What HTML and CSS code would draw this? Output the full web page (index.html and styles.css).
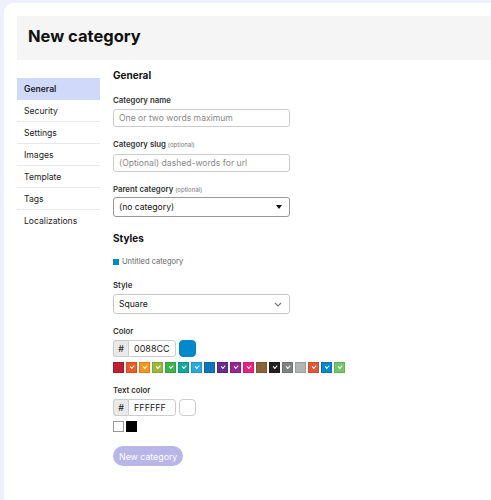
FILE: index.html
```html
<!DOCTYPE html>
<html lang="en">
<head>
	<meta charset="UTF-8">
	<title>New category</title>
	<link rel="stylesheet" href="styles.css">
</head>
<body>
<div class="page">
	<div class="header">
		<h1>New category</h1>
	</div>

	<div class="layout">
		<ul class="nav">
			<li class="active">General</li>
			<li>Security</li>
			<li>Settings</li>
			<li>Images</li>
			<li>Template</li>
			<li>Tags</li>
			<li>Localizations</li>
		</ul>

		<form class="content">
			<h2>General</h2>

			<div class="field">
				<label>Category name</label>
				<input class="text" type="text" placeholder="One or two words maximum">
			</div>

			<div class="field">
				<label>Category slug <span class="opt">(optional)</span></label>
				<input class="text" type="text" placeholder="(Optional) dashed-words for url">
			</div>

			<div class="field">
				<label class="tight">Parent category <span class="opt">(optional)</span></label>
				<div class="combo">
					<span>(no category)</span>
					<span class="caret"></span>
				</div>
			</div>

			<h2 class="styles">Styles</h2>

			<div class="badge"><span class="badge-dot"></span>Untitled category</div>

			<div class="field">
				<label>Style</label>
				<div class="combo light">
					<span>Square</span>
					<svg class="chev" width="8" height="5" viewBox="0 0 8 5"><path d="M1 1l3 3 3-3" fill="none" stroke="#777" stroke-width="1.1"/></svg>
				</div>
			</div>

			<div class="field">
				<label>Color</label>
				<div class="hex-row">
					<span class="hash">#</span>
					<input class="hex" type="text" value="0088CC">
					<span class="preview" style="background:#0088cc;border-color:#0088cc"></span>
				</div>
				<div class="swatches">
					<span class="sw" style="background:#bf1e2e"></span>
					<span class="sw used" style="background:#f1592a"></span>
					<span class="sw used" style="background:#f7941d"></span>
					<span class="sw used" style="background:#9eb83b"></span>
					<span class="sw used" style="background:#3ab54a"></span>
					<span class="sw used" style="background:#12a89d"></span>
					<span class="sw used" style="background:#25aae2"></span>
					<span class="sw" style="background:#0e76bd"></span>
					<span class="sw used" style="background:#652d90"></span>
					<span class="sw used" style="background:#92278f"></span>
					<span class="sw used" style="background:#ed207b"></span>
					<span class="sw" style="background:#8c6238"></span>
					<span class="sw used" style="background:#231f20"></span>
					<span class="sw used" style="background:#808281"></span>
					<span class="sw" style="background:#b3b5b4"></span>
					<span class="sw used" style="background:#e45735"></span>
					<span class="sw used" style="background:#0088cc"></span>
					<span class="sw used" style="background:#74c56c"></span>
				</div>
			</div>

			<div class="field">
				<label>Text color</label>
				<div class="hex-row">
					<span class="hash">#</span>
					<input class="hex" type="text" value="FFFFFF">
					<span class="preview"></span>
				</div>
				<div class="swatches">
					<span class="sw white"></span>
					<span class="sw" style="background:#000"></span>
				</div>
			</div>

			<button type="button" class="create">New category</button>
		</form>
	</div>
</div>
</body>
</html>
```

FILE: styles.css
```css
body{
	margin: 0;
	background: #eef0fd;
	font-family: Inter, "Noto Sans", sans-serif;
	color: #222;
}

.page{
	margin: 3px 0 0 4px;
	padding: 13px 0 0 13px;
	background: #fff;
	border-top-left-radius: 9px;
	height: 484px;
}

.header{
	height: 44px;
	background: #f5f5f5;
	display: flex;
	align-items: center;
	padding: 0 0 4px 11px;
	box-sizing: border-box;
}

.header h1{
	margin: 0;
	font-size: 16.5px;
	font-weight: 700;
	color: #111;
}

.layout{
	display: flex;
	margin-top: 8px;
}

/* left menu */
.nav{
	list-style: none;
	margin: 10px 0 0 0;
	padding: 0;
	width: 83px;
	flex: none;
}

.nav li{
	height: 22px;
	line-height: 22px;
	padding-left: 7px;
	font-size: 8.6px;
	color: #222;
	border-bottom: 1px solid #e9e9e9;
	box-sizing: border-box;
}

.nav li:last-child{
	border-bottom: none;
}

.nav li.active{
	background: #d1d9fb;
	font-weight: 600;
	border-bottom: none;
}

/* form */
.content{
	margin-left: 13px;
	width: 240px;
}

.content h2{
	margin: 0 0 12px 0;
	font-size: 10px;
	line-height: 14px;
	font-weight: 700;
	color: #111;
}

.content h2.styles{
	margin-top: 14px;
	margin-bottom: 12px;
}

.field{
	margin-bottom: 11px;
}

.field label{
	display: block;
	font-size: 7.8px;
	line-height: 12px;
	font-weight: 600;
	color: #333;
	margin-bottom: 3px;
}

.field label.tight{
	margin-bottom: 1px;
}

.opt{
	font-size: 6px;
	font-weight: 400;
	color: #777;
}

input.text{
	display: block;
	box-sizing: border-box;
	width: 177px;
	height: 18px;
	border: 1px solid #ccc;
	border-radius: 3px;
	padding: 0 5px;
	font-family: inherit;
	font-size: 8.6px;
	color: #222;
}

input.text::placeholder{
	color: #888;
}

.combo{
	box-sizing: border-box;
	width: 177px;
	height: 20px;
	border: 1px solid #999;
	border-radius: 3px;
	padding: 0 7px 0 5px;
	display: flex;
	align-items: center;
	justify-content: space-between;
	font-size: 8.6px;
	color: #111;
}

.combo.light{
	border-color: #c8c8c8;
}

.caret{
	width: 0;
	height: 0;
	border-left: 3.5px solid transparent;
	border-right: 3.5px solid transparent;
	border-top: 4px solid #111;
}

.badge{
	display: flex;
	align-items: center;
	font-size: 7.5px;
	color: #666;
	margin-bottom: 13px;
}

.badge-dot{
	width: 6px;
	height: 6px;
	background: #0088cc;
	margin-right: 3px;
}

/* colour pickers */
.hex-row{
	display: flex;
	align-items: center;
	height: 17px;
}

.hash{
	box-sizing: border-box;
	width: 15px;
	height: 17px;
	background: #e9e9e9;
	border: 1px solid #ccc;
	border-right: none;
	border-radius: 3px 0 0 3px;
	display: flex;
	align-items: center;
	justify-content: center;
	font-size: 9px;
	color: #222;
}

input.hex{
	box-sizing: border-box;
	width: 48px;
	height: 17px;
	border: 1px solid #ccc;
	border-radius: 0 3px 3px 0;
	padding: 0 0 0 5px;
	font-family: inherit;
	font-size: 9px;
	color: #222;
}

.preview{
	box-sizing: border-box;
	width: 17px;
	height: 17px;
	margin-left: 3px;
	border: 1px solid #ccc;
	border-radius: 4px;
	background: #fff;
}

.swatches{
	display: flex;
	gap: 2px;
	margin-top: 5px;
}

.sw{
	flex: none;
	box-sizing: border-box;
	width: 11px;
	height: 11px;
	border: 1px solid rgba(0,0,0,0.12);
	position: relative;
}

.sw.used::after{
	content: "";
	position: absolute;
	left: 3px;
	top: 2px;
	width: 3px;
	height: 1.5px;
	border-left: 1px solid #fff;
	border-bottom: 1px solid #fff;
	transform: rotate(-45deg);
}

.sw.white{
	background: #fff;
	border-color: #999;
}

.create{
	margin-top: 3px;
	height: 20px;
	padding: 0 6px;
	border: none;
	border-radius: 10px;
	background: #b8b6e9;
	color: #fff;
	font-family: inherit;
	font-size: 8.8px;
}
```
